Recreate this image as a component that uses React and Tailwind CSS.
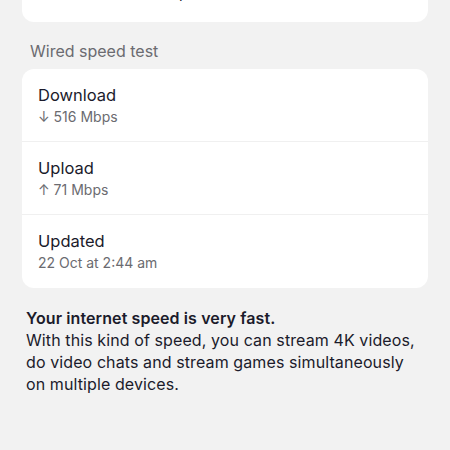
import React from 'react'

const rows = [
  { title: 'Download', detail: '↓ 516 Mbps' },
  { title: 'Upload', detail: '↑ 71 Mbps' },
  { title: 'Updated', detail: '22 Oct at 2:44 am' },
]

export default function App() {
  return (
    <div className="w-[450px] h-[450px] overflow-hidden bg-[#f2f2f2] font-['Inter',sans-serif]">
      <div className="mx-[22px] -mt-[20px] h-[42px] rounded-[12px] bg-white flex items-start justify-between px-4 pt-[6px] overflow-hidden">
        <span className="text-[15px] leading-[16px] text-[#1b1b2b] translate-y-[-1px]">Select network setup</span>
        <span className="text-[12px] leading-[16px] text-[#555]">⌄</span>
      </div>

      <div className="px-[30px] pt-[19px] pb-[8px] text-[16px] leading-[20px] text-[#6b6b70]">Wired speed test</div>

      <div className="mx-[22px] rounded-[12px] bg-white">
        {rows.map((r, i) => (
          <div key={r.title} className={i < rows.length - 1 ? 'border-b border-[#f0f0f0] px-4 pt-[15px] pb-[14px]' : 'px-4 pt-[15px] pb-[15px]'}>
            <div className="text-[16.5px] leading-[22px] text-[#1b1b2b]">{r.title}</div>
            <div className="text-[14px] leading-[20px] text-[#6b6b70] mt-[1px]">{r.detail}</div>
          </div>
        ))}
      </div>

      <div className="pl-[26px] pr-[26px] pt-[19px] text-[16px] leading-[22px] tracking-[0.1px] text-[#1b1b2b]">
        <div className="font-semibold">Your internet speed is very fast.</div>
        <div>With this kind of speed, you can stream 4K videos, do video chats and stream games simultaneously on multiple devices.</div>
      </div>
    </div>
  )
}
